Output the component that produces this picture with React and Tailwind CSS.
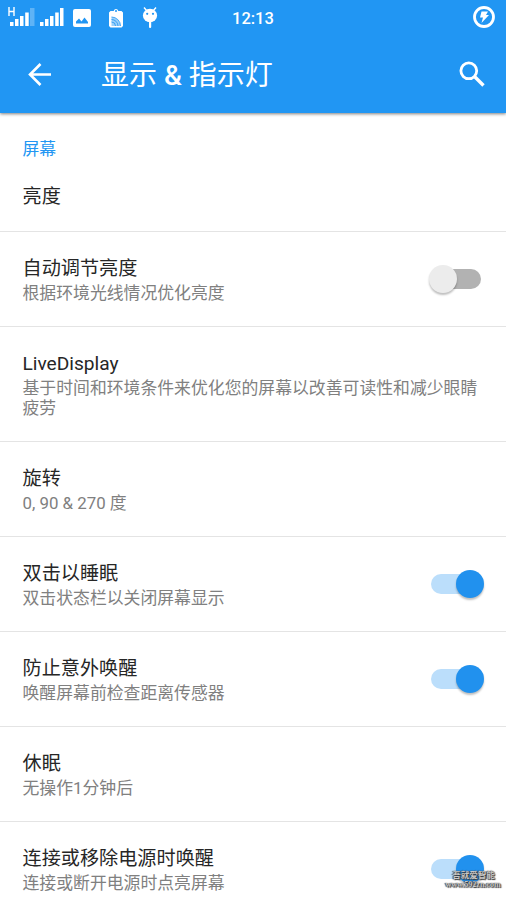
import React from 'react';

function SignalIcon({ dim }) {
  return (
    <svg className="h-[34px] w-[28px]" viewBox="0 0 28 34" fill="#fff">
      <rect x="2" y="22" width="3.5" height="4" />
      <rect x="7" y="19" width="3.5" height="7" />
      <rect x="12" y="16" width="3.5" height="10" />
      <rect x="17.2" y="12.5" width="3.5" height="13.5" />
      <rect x="22" y="8" width={dim ? 4.5 : 3.5} height="18" opacity={dim ? 0.28 : 1} />
    </svg>
  );
}

function StatusBar() {
  return (
    <div className="relative flex h-[34px] items-center">
      <svg className="absolute left-[8px] top-[7px] h-[9px] w-[7px]" viewBox="0 0 7 9" fill="none" stroke="#fff" strokeWidth="1.400">
        <path d="M1 0v9M6 0v9M1 4.500h5" />
      </svg>
      <div className="ml-[8px] flex">
        <SignalIcon dim />
        <div className="ml-[2px]"><SignalIcon /></div>
      </div>
      <svg className="ml-[7px] mt-[1px] h-[18px] w-[18px]" viewBox="0 0 18 18">
        <rect width="18" height="18" rx="2" fill="#fff" />
        <path d="M3 14.500v-2l3-3 2.500 3 3-4 3.500 4.500v1.500z" fill="#2196f3" />
      </svg>
      <svg className="ml-[18px] mt-[1px] h-[20px] w-[14px]" viewBox="0 0 14 20">
        <path d="M1.500 3h3.200a2.400 2.800 0 0 1 4.600 0h3.200l1.500 1.500v13.500l-1.500 1.500h-11l-1.500-1.500V4.500z" fill="#fff" />
        <circle cx="7" cy="3" r="1" fill="#2196f3" />
        <path d="M2.500 9a9 9 0 0 1 9 9h-9z" fill="#2196f3" opacity=".45" />
        <path d="M2.500 9a9 9 0 0 1 9 9M2.500 11.500a6.500 6.500 0 0 1 6.500 6.500M2.500 14a4 4 0 0 1 4 4" fill="none" stroke="#2196f3" strokeWidth=".8" />
      </svg>
      <svg className="ml-[19px] h-[22px] w-[16px]" viewBox="0 0 16 22">
        <path d="M2 1.500l3 3.500M14 1.500l-3 3.500" stroke="#fff" strokeWidth="1.400" />
        <ellipse cx="8" cy="9.500" rx="7.100" ry="6.800" fill="#fff" />
        <rect x="7" y="15" width="2.200" height="7" rx="1" fill="#fff" />
        <circle cx="5.200" cy="7.800" r="1.100" fill="#2196f3" />
        <circle cx="11" cy="7.800" r="1.100" fill="#2196f3" />
      </svg>
      <span className="ml-[74px] mt-[3px] text-[16.500px] font-medium leading-5">12:13</span>
      <svg className="ml-auto mr-[11px] h-[22px] w-[22px]" viewBox="0 0 22 22">
        <circle cx="11" cy="11" r="9.500" fill="none" stroke="#fff" strokeWidth="2.800" />
        <path d="M8.500 5.500h6.500l-2 3.500h3l-7.500 8 1.500-5.500H7z" fill="#fff" />
      </svg>
    </div>
  );
}

function Toolbar() {
  return (
    <div className="flex h-[79px] items-center">
      <svg className="ml-[28px] mt-[2px] h-[23px] w-[23px]" viewBox="0 0 23 23" fill="none" stroke="#fff" strokeWidth="2.600">
        <path d="M12.500 1L2 11.500 12.500 22M2 11.500h21" />
      </svg>
      <h1 className="ml-[50px] mt-[4px] text-[28px] font-normal leading-9">
        显示 <span className="font-medium">&amp;</span> 指示灯
      </h1>
      <svg className="ml-auto mr-[21px] mt-[1px] h-[26px] w-[26px]" viewBox="0 0 26 26" fill="none" stroke="#fff" strokeWidth="2.800">
        <circle cx="9.800" cy="9.800" r="7.900" />
        <path d="M15.500 15.500l9 9" strokeWidth="3.300" />
      </svg>
    </div>
  );
}

function Switch({ on }) {
  return (
    <div className="relative mt-[2px] h-[30px] w-[56px] shrink-0">
      <div className={`absolute left-[2px] top-[4px] h-5 w-[50px] rounded-full ${on ? 'bg-[#bbdefb]' : 'bg-[#b2b2b2]'}`} />
      <div
        className={`absolute top-0 h-[28px] w-[28px] rounded-full shadow-[0_2px_2px_rgba(0,0,0,0.25)] ${
          on ? 'left-[27px] bg-[#2191ee]' : 'left-0 bg-[#ececec]'
        }`}
      />
    </div>
  );
}

function Row({ title, summary, toggle, tall, last }) {
  return (
    <div
      className={`flex shrink-0 items-center border-[#e4e4e4] pl-[22.500px] pr-[21px] ${
        tall ? 'h-[115px] border-b' : last ? 'h-[94px]' : 'h-[95px] border-b'
      }`}
    >
      <div className="min-w-0 flex-1">
        <div className="mb-[1px] text-[19.150px] leading-[26px] text-[#262626]">{title}</div>
        <div className="text-[16.850px] leading-[20px] text-[#808080]">{summary}</div>
      </div>
      {toggle !== undefined && <Switch on={toggle} />}
    </div>
  );
}

export default function App() {
  return (
    <div className="relative flex h-[899px] w-[506px] flex-col overflow-hidden bg-white font-[Roboto,'Noto_Sans_CJK_SC',sans-serif]" lang="zh-CN">
      <header className="z-10 h-[113px] shrink-0 bg-[#2196f3] text-white shadow-[0_1px_3px_rgba(0,0,0,0.5)]">
        <StatusBar />
        <Toolbar />
      </header>
      <section className="flex h-[119px] shrink-0 flex-col border-b border-[#e4e4e4] pl-[22.500px] pt-[25px]">
        <h2 className="text-[16.850px] font-normal leading-[22px] text-[#2196f3]">屏幕</h2>
        <div className="mt-[24px] text-[19.150px] leading-[26px] text-[#262626]">亮度</div>
      </section>
      <Row title="自动调节亮度" summary="根据环境光线情况优化亮度" toggle={false} />
      <Row title="LiveDisplay" summary="基于时间和环境条件来优化您的屏幕以改善可读性和减少眼睛疲劳" tall />
      <Row title="旋转" summary="0, 90 & 270 度" />
      <Row title="双击以睡眠" summary="双击状态栏以关闭屏幕显示" toggle={true} />
      <Row title="防止意外唤醒" summary="唤醒屏幕前检查距离传感器" toggle={true} />
      <Row title="休眠" summary="无操作1分钟后" />
      <Row title="连接或移除电源时唤醒" summary="连接或断开电源时点亮屏幕" toggle={true} last />
      <div className="absolute left-[445px] top-[870px] w-[56px] whitespace-nowrap text-center font-bold text-[#c8c8c8] [text-shadow:0_0_1px_#333,1px_1px_1px_#333,-1px_0_1px_#444]">
        <div className="pl-[1px] text-[8.500px] leading-[10px]">吾就爱智能</div>
        <div className="font-['Liberation_Serif',serif] text-[8px] leading-[10px]">www.592zn.com</div>
      </div>
    </div>
  );
}
